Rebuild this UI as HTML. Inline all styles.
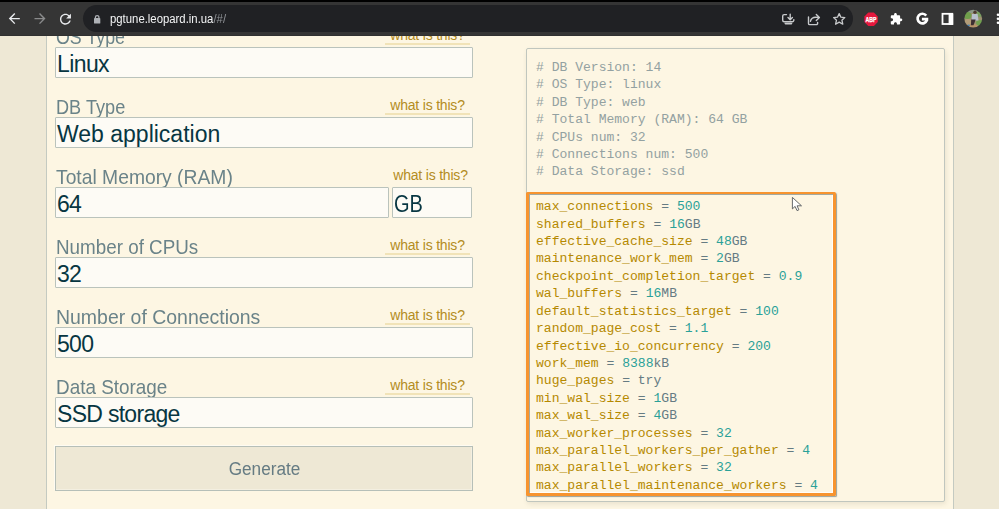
<!DOCTYPE html>
<html><head><meta charset="utf-8">
<style>
*{box-sizing:border-box;margin:0;padding:0}
html,body{width:999px;height:509px;overflow:hidden;background:#eee8d5;font-family:"Liberation Sans",sans-serif;position:relative}
.abs{position:absolute}
#topstrip{z-index:10;left:0;top:0;width:999px;height:2px;background:#000}
#toolbar{z-index:10;left:0;top:2px;width:999px;height:34px;background:#353535;border-bottom:1px solid #303030}
#pill{z-index:11;left:83px;top:5px;width:770px;height:27px;border-radius:14px;background:#202124}
#url{z-index:12;left:110px;top:10px;font-size:12px;line-height:18px;color:#f4f5f6;white-space:nowrap;transform:scaleX(0.945);transform-origin:0 0}
#url span{color:#8f9397}
#container{left:46px;top:36px;width:908px;height:474px;background:#fdf6e3;border-left:1px solid #c4cac1;border-right:1px solid #c4cac1}
.lbl{position:absolute;left:56px;font-size:20.3px;line-height:20px;color:#6a8389;white-space:nowrap;transform:scaleX(0.935);transform-origin:0 0}
.lnk{position:absolute;left:385px;width:85px;text-align:center;font-size:14px;letter-spacing:-0.2px;line-height:16px;color:#b38c22;border-bottom:2px solid #f1e3b8;white-space:nowrap}
.inp{position:absolute;left:55px;width:418px;height:31px;background:#fdfbf5;border:1px solid #bac3bc;border-radius:1px;font-size:23px;line-height:28px;color:#073642;padding-left:1px;padding-top:2px;white-space:nowrap}
#gen{left:55px;top:446px;width:418px;height:45px;background:#eee8d5;border:1px solid #b6bfb8;box-shadow:-1px -1px 0 rgba(255,255,255,.55), inset -1px -1px 0 rgba(255,255,255,.3);font-size:18px;line-height:45px;text-align:center;color:#657b83}
#panel{left:526px;top:48px;width:419px;height:454px;border:1px solid #c0c6be;border-radius:2px;background:#fdf6e3;box-shadow:1px 2px 5px rgba(60,60,30,.10)}
#code{left:536px;top:59px;font-family:"Liberation Mono",monospace;font-size:13.05px;line-height:17.4px;color:#657b83;white-space:pre}
.c{color:#93a1a1}
.k{color:#b58900}
.n{color:#2aa198}
#obox{left:526px;top:192px;width:310px;height:304px;border:2px solid #f7942f;border-left-width:3px;border-right-width:3px;border-bottom-width:3px;border-radius:1.5px;box-shadow:1px 1px 1px rgba(90,105,105,.6), inset 1px 1px 0.6px rgba(90,105,105,.55), inset -1px -1px 1px rgba(255,255,255,.9)}
</style></head><body>
<div class="abs" id="topstrip"></div>
<div class="abs" id="toolbar"></div>
<div class="abs" id="pill"></div>
<div class="abs" id="url">pgtune.leopard.in.ua<span>/#/</span></div>

<svg class="abs" style="left:0;top:0;z-index:13" width="999" height="36" viewBox="0 0 999 36">
<g transform="translate(6.05,10.35) scale(0.6875)" fill="#e8eaed"><path d="M20 11H7.83l5.59-5.59L12 4l-8 8 8 8 1.41-1.41L7.83 13H20v-2z"/></g>
<g transform="translate(48.25,10.35) scale(-0.6875,0.6875)" fill="#8a8b8c"><path d="M20 11H7.83l5.59-5.59L12 4l-8 8 8 8 1.41-1.41L7.83 13H20v-2z"/></g>
<g transform="translate(57.2,10.9) scale(0.6875)" fill="#e8eaed"><path d="M17.65 6.35C16.2 4.9 14.21 4 12 4c-4.42 0-7.99 3.58-7.99 8s3.57 8 7.99 8c3.73 0 6.84-2.55 7.73-6h-2.08c-.82 2.33-3.04 4-5.650 4-3.31 0-6-2.69-6-6s2.69-6 6-6c1.66 0 3.14.69 4.22 1.78L13 11h7V4l-2.35 2.35z"/></g>
<g fill="#aeb1b6"><rect x="94" y="18.1" width="6.3" height="5.5" rx="0.7"/></g>
<path d="M95.4 18.4V17.3a1.75 1.75 0 0 1 3.5 0V18.4" fill="none" stroke="#aeb1b6" stroke-width="1.25"/>
<g fill="none" stroke="#c8cacc" stroke-width="1.4" stroke-linecap="round" stroke-linejoin="round">
<path d="M786.5 14.6H784.2a1.5 1.5 0 0 0-1.5 1.5V20.3a1.5 1.5 0 0 0 1.5 1.5H792.3a1.5 1.5 0 0 0 1.5-1.5V19.6"/>
<path d="M790.2 14.3V19.5M788 17.6L790.2 19.8L792.4 17.6"/>
<path d="M785.3 23.6H791.5" stroke-width="1.6"/>
<path d="M808.5 17V23.4a1.2 1.2 0 0 0 1.2 1.2H816.4a1.2 1.2 0 0 0 1.2-1.2V22.4"/>
<path d="M810.4 21.2C811.2 18.2 813.6 16.6 817.8 17.4M816.3 14.6L819.4 17.6L816.3 20.6"/>
<path d="M839.2 13.6L840.9 17.2L844.8 17.6L841.9 20.2L842.8 24.2L839.2 22.1L835.6 24.2L836.5 20.2L833.6 17.6L837.5 17.2Z" stroke-width="1.3"/>
</g>
<path d="M868.3 12.5H873.9L877.8 16.4V22L873.9 25.9H868.3L864.4 22V16.4Z" fill="#e5183d"/>
<text x="865.6" y="21.9" font-family="Liberation Sans" font-weight="bold" font-size="7" fill="#fff" stroke="#fff" stroke-width="0.25" textLength="11" lengthAdjust="spacingAndGlyphs">ABP</text>
<g transform="translate(889.7,12.45) scale(0.548)" fill="#ffffff"><path d="M20.5 11H19V7c0-1.1-.9-2-2-2h-4V3.5C13 2.12 11.88 1 10.5 1S8 2.12 8 3.5V5H4c-1.1 0-1.99.9-1.99 2v3.8H3.5c1.49 0 2.7 1.21 2.7 2.7s-1.21 2.7-2.7 2.7H2V20c0 1.1.9 2 2 2h3.8v-1.5c0-1.49 1.21-2.7 2.7-2.7 1.49 0 2.7 1.21 2.7 2.7V22H17c1.1 0 2-.9 2-2v-4h1.5c1.380 0 2.5-1.12 2.5-2.5S21.88 11 20.5 11z"/></g>
<path d="M926.2 15.6A4.8 4.8 0 1 0 926.9 20.3V19.1H921.9" fill="none" stroke="#fff" stroke-width="2.7"/>
<rect x="942.5" y="13.8" width="9.8" height="10.2" fill="none" stroke="#fff" stroke-width="1.8"/>
<rect x="948.6" y="13.8" width="4.6" height="11" fill="#fff"/>
<defs><filter id="avb" x="-10%" y="-10%" width="120%" height="120%"><feGaussianBlur stdDeviation="0.45"/></filter><clipPath id="av"><circle cx="973.2" cy="18.7" r="8.9"/></clipPath></defs>
<g clip-path="url(#av)"><g filter="url(#avb)">
<rect x="963" y="9" width="21" height="20" fill="#9c9270"/>
<rect x="963" y="9" width="21" height="4" fill="#8c9886"/>
<ellipse cx="967.5" cy="15.5" rx="4" ry="3.5" fill="#6f9f4c"/>
<ellipse cx="979.5" cy="14" rx="3" ry="3" fill="#7aa060"/>
<ellipse cx="980" cy="23" rx="4" ry="3" fill="#72a050"/>
<ellipse cx="968" cy="22" rx="4" ry="3" fill="#b39c78"/>
<ellipse cx="973" cy="26.5" rx="5" ry="2.5" fill="#b8946a"/>
<circle cx="975" cy="12.2" r="1.7" fill="#4d3a2e"/>
<path d="M972 14h5.6l0.9 6.5h-6.9z" fill="#b8c0cc"/>
<path d="M971.2 19.5h4.5l-2.2 5.8h-2.6z" fill="#3c2f30"/>
<ellipse cx="968.6" cy="25.6" rx="1.4" ry="1" fill="#4a86b8"/>
</g></g>
<circle cx="998" cy="14.7" r="1.3" fill="#fff"/>
<circle cx="998" cy="18.7" r="1.3" fill="#fff"/>
<circle cx="998" cy="22.7" r="1.3" fill="#fff"/>
</svg>

<div class="abs" id="container"></div>

<div class="lbl" style="top:27px;transform:scaleX(0.879)">OS Type</div>
<div class="lnk" style="top:27px">what is this?</div>
<div class="inp" style="top:47px;letter-spacing:-0.6px">Linux</div>

<div class="lbl" style="top:97px;transform:scaleX(0.895)">DB Type</div>
<div class="lnk" style="top:97px">what is this?</div>
<div class="inp" style="top:117px">Web application</div>

<div class="lbl" style="top:167px;transform:scaleX(0.951)">Total Memory (RAM)</div>
<div class="lnk" style="top:167px;border-bottom-color:transparent;left:388px">what is this?</div>
<div class="inp" style="top:187px;width:334px;letter-spacing:-0.8px">64</div>
<div class="inp" style="top:187px;left:392px;width:80px;padding-left:1px"><span style="display:inline-block;transform:scaleX(0.87);transform-origin:0 0">GB</span></div>

<div class="lbl" style="top:237px;transform:scaleX(0.928)">Number of CPUs</div>
<div class="lnk" style="top:237px">what is this?</div>
<div class="inp" style="top:257px;letter-spacing:-0.8px">32</div>

<div class="lbl" style="top:307px;transform:scaleX(0.959)">Number of Connections</div>
<div class="lnk" style="top:307px">what is this?</div>
<div class="inp" style="top:327px;letter-spacing:-0.7px">500</div>

<div class="lbl" style="top:377px;transform:scaleX(0.932)">Data Storage</div>
<div class="lnk" style="top:377px">what is this?</div>
<div class="inp" style="top:397px;letter-spacing:-0.7px">SSD storage</div>

<div class="abs" id="gen"><span style="display:inline-block;transform:scaleX(0.955);position:relative;left:1px">Generate</span></div>

<div class="abs" id="panel"></div>
<div class="abs" id="obox"></div>
<div class="abs" id="code"><span class="c"># DB Version: 14
# OS Type: linux
# DB Type: web
# Total Memory (RAM): 64 GB
# CPUs num: 32
# Connections num: 500
# Data Storage: ssd</span>

<span class="k">max_connections</span> = <span class="n">500</span>
<span class="k">shared_buffers</span> = <span class="n">16</span>GB
<span class="k">effective_cache_size</span> = <span class="n">48</span>GB
<span class="k">maintenance_work_mem</span> = <span class="n">2</span>GB
<span class="k">checkpoint_completion_target</span> = <span class="n">0.9</span>
<span class="k">wal_buffers</span> = <span class="n">16</span>MB
<span class="k">default_statistics_target</span> = <span class="n">100</span>
<span class="k">random_page_cost</span> = <span class="n">1.1</span>
<span class="k">effective_io_concurrency</span> = <span class="n">200</span>
<span class="k">work_mem</span> = <span class="n">8388</span>kB
<span class="k">huge_pages</span> = try
<span class="k">min_wal_size</span> = <span class="n">1</span>GB
<span class="k">max_wal_size</span> = <span class="n">4</span>GB
<span class="k">max_worker_processes</span> = <span class="n">32</span>
<span class="k">max_parallel_workers_per_gather</span> = <span class="n">4</span>
<span class="k">max_parallel_workers</span> = <span class="n">32</span>
<span class="k">max_parallel_maintenance_workers</span> = <span class="n">4</span></div>

<svg class="abs" style="left:790px;top:195px;z-index:20" width="16" height="20" viewBox="0 0 16 20"><path d="M2.4 2.4L2.4 13.9L5.1 11.4L7 15.6L8.9 14.8L7.1 10.8L11.5 10.8Z" fill="#fff" stroke="#55595c" stroke-width="0.9" stroke-linejoin="round"/></svg>
</body></html>
